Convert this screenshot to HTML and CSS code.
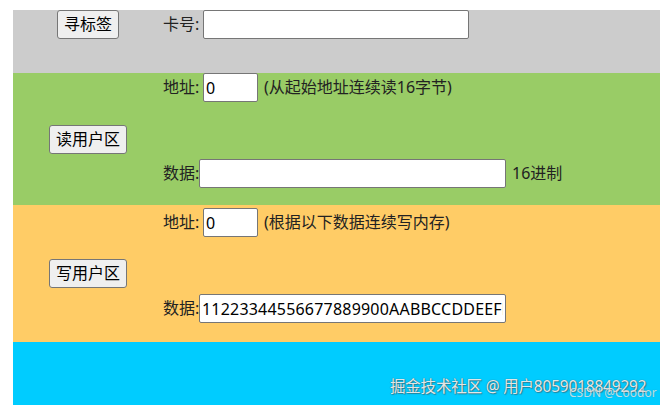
FILE: index.html
```html
<!DOCTYPE html>
<html lang="zh-CN">
<head>
<meta charset="utf-8">
<title>RFID</title>
<link rel="stylesheet" href="styles.css">
</head>
<body>
<div class="page">
  <div class="row row-gray">
    <div class="cell-left top"><button class="btn">寻标签</button></div>
    <div class="cell-right">
      <div class="line"><span class="lbl">卡号:</span><input class="inp w-card" type="text"></div>
    </div>
  </div>
  <div class="row row-green">
    <div class="cell-left"><button class="btn">读用户区</button></div>
    <div class="cell-right lines pad-green">
      <div class="line"><span class="lbl">地址:</span><input class="inp w-addr" type="text" value="0"><span class="note">(从起始地址连续读16字节)</span></div>
      <div class="line"><span class="lbl tight">数据:</span><input class="inp w-data" type="text"><span class="note">16进制</span></div>
    </div>
  </div>
  <div class="row row-orange">
    <div class="cell-left"><button class="btn">写用户区</button></div>
    <div class="cell-right lines pad-orange">
      <div class="line"><span class="lbl">地址:</span><input class="inp w-addr" type="text" value="0"><span class="note">(根据以下数据连续写内存)</span></div>
      <div class="line"><span class="lbl tight">数据:</span><input class="inp w-data wide" type="text" value="11223344556677889900AABBCCDDEEFF"></div>
    </div>
  </div>
  <div class="row row-cyan"></div>
  <div class="wm">掘金技术社区 @ 用户8059018849292</div>
  <div class="wm2">CSDN @Coodor</div>
</div>
</body>
</html>
```

FILE: styles.css
```css
html, body {
  margin: 0;
  padding: 0;
  background: #ffffff;
}
body {
  font-family: "Noto Sans", "Noto Sans CJK SC", sans-serif;
  font-size: 16px;
  color: #222222;
  overflow: hidden;
}
.page {
  position: relative;
  padding: 10px 0 0 13px;
  width: 647px;
  height: 398px;
}
.row {
  display: flex;
}
.row-gray { background: #cccccc; height: 63px; }
.row-green { background: #99cc66; height: 132px; }
.row-orange { background: #ffcc66; height: 137px; }
.row-cyan { background: #00ccff; height: 63px; }

.cell-left {
  width: 150px;
  flex: none;
  display: flex;
  justify-content: center;
  align-items: center;
}
.cell-left.top { align-items: flex-start; }
.cell-right {
  flex: 1;
  display: flex;
  flex-direction: column;
}
.lines { gap: 57px; }
.pad-green { padding: 0 0 17px 0; }
.pad-orange { padding: 3px 0 19px 0; }

.line {
  display: flex;
  align-items: center;
  height: 29px;
  white-space: nowrap;
}
.lbl {
  width: 40px;
  flex: none;
  line-height: 29px;
}
.lbl.tight { width: 36px; }
.note {
  margin-left: 6px;
  line-height: 29px;
}

.btn {
  font-family: inherit;
  font-size: 16px;
  color: #000000;
  height: 29px;
  padding: 0 6px;
  background: #efefef;
  border: 1px solid #767676;
  border-radius: 3px;
  line-height: 27px;
}
.inp {
  box-sizing: border-box;
  height: 29px;
  font-family: inherit;
  font-size: 16px;
  color: #000000;
  padding: 1px 2px;
  margin: 0;
  border: 1px solid #767676;
  border-radius: 2px;
  background: #ffffff;
}
.inp.wide { letter-spacing: 0.2px; }
.w-card { width: 266px; }
.w-addr { width: 55px; }
.w-data { width: 307px; }

.wm {
  position: absolute;
  left: 390px;
  top: 374px;
  font-size: 15.5px;
  line-height: 24px;
  letter-spacing: -0.2px;
  color: rgba(250, 250, 250, 0.9);
  text-shadow: 0 0 1px rgba(70, 70, 70, 0.9), 1px 1px 1px rgba(70, 70, 70, 0.5);
  white-space: nowrap;
}
.wm2 {
  position: absolute;
  left: 569px;
  top: 385px;
  font-size: 12px;
  line-height: 16px;
  color: rgba(255, 255, 255, 0.7);
  text-shadow: 0 0 1px rgba(80, 80, 80, 0.5);
  white-space: nowrap;
}
```
